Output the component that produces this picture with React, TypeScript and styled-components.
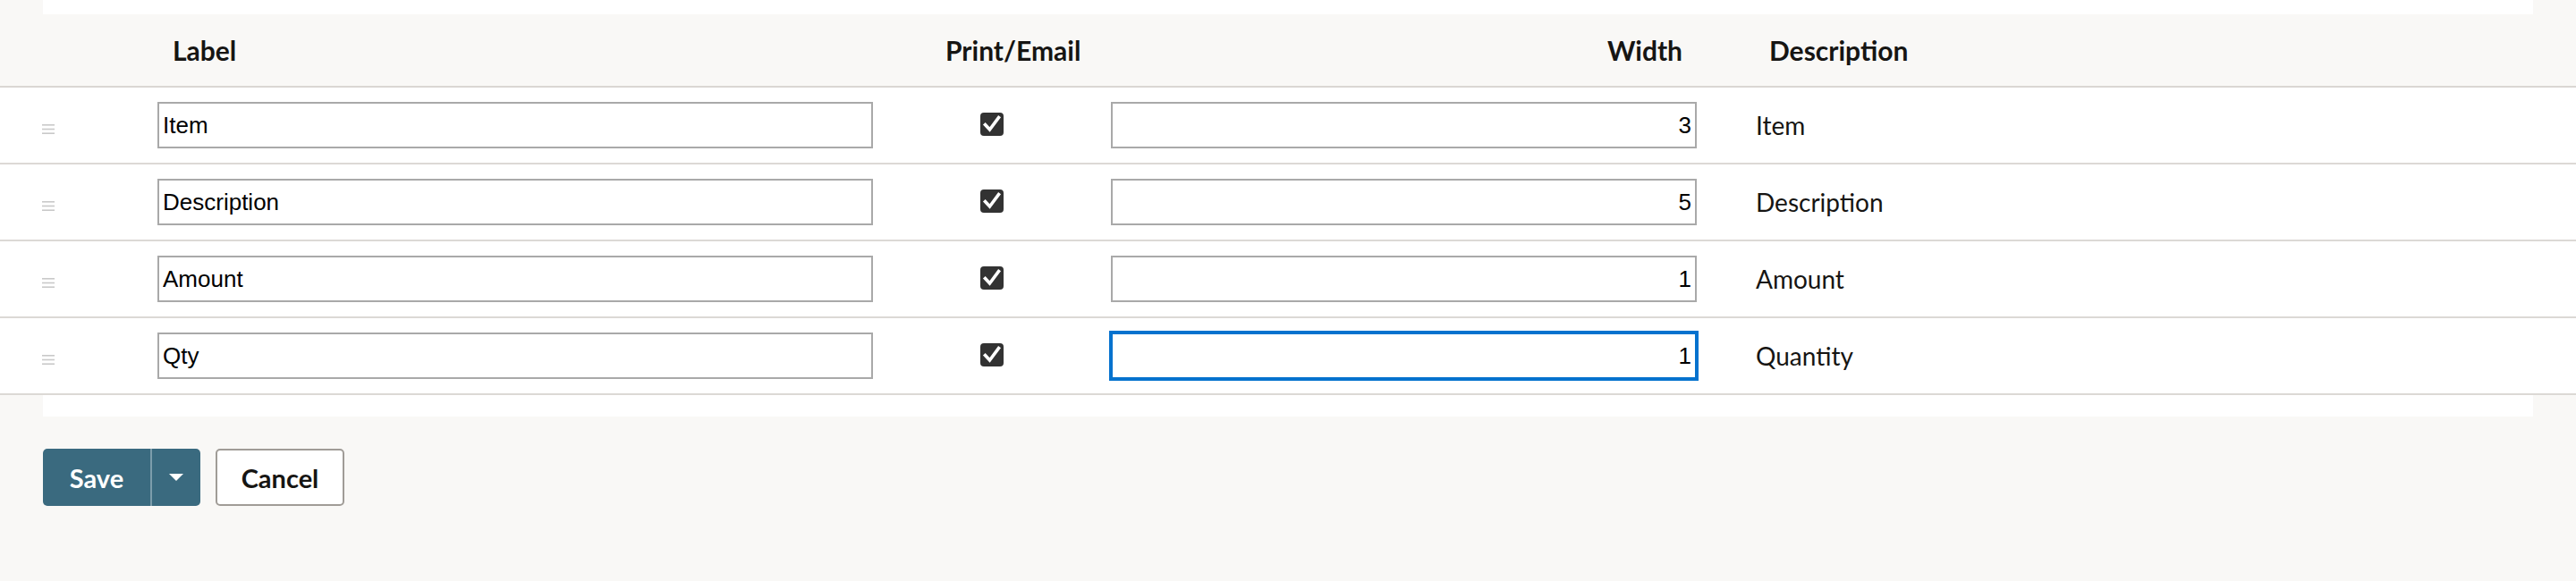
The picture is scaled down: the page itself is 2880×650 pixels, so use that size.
import React from 'react';
import styled, { createGlobalStyle } from 'styled-components';

interface ColumnRow {
  label: string;
  width: string;
  description: string;
  focused?: boolean;
}

const rows: ColumnRow[] = [
  { label: 'Item', width: '3', description: 'Item' },
  { label: 'Description', width: '5', description: 'Description' },
  { label: 'Amount', width: '1', description: 'Amount' },
  { label: 'Qty', width: '1', description: 'Quantity', focused: true },
];

const GlobalStyle = createGlobalStyle`
  html, body {
    margin: 0;
    padding: 0;
    background: #f9f8f6;
  }
  body {
    font-family: Lato, "Noto Sans", sans-serif;
    color: #161513;
  }
`;

const COLUMNS = '160px 832px 234px 687px 1fr';

const DragHandle: React.FC = () => (
  <StyledHandle width="14" height="11" viewBox="0 0 14 11">
    <rect x="0" y="0" width="14" height="1.6" fill="#c9c9c9" />
    <rect x="0" y="4.7" width="14" height="1.6" fill="#c9c9c9" />
    <rect x="0" y="9.4" width="14" height="1.6" fill="#c9c9c9" />
  </StyledHandle>
);

const CheckBox: React.FC = () => (
  <StyledCheck role="checkbox" aria-checked="true">
    <svg width="26" height="26" viewBox="0 0 26 26">
      <polyline
        points="5.5,13.5 10.5,19 20.5,5.5"
        fill="none"
        stroke="#ffffff"
        strokeWidth="3.6"
        strokeLinecap="square"
      />
    </svg>
  </StyledCheck>
);

const App: React.FC = () => {
  return (
    <>
      <GlobalStyle />
      <StyledPage>
        <StyledCard>
          <StyledTable>
            <StyledHeaderRow>
              <StyledHeadCell />
              <StyledHeadCell $pl={33}>Label</StyledHeadCell>
              <StyledHeadCell $pl={65}>Print/Email</StyledHeadCell>
              <StyledHeadCell $align="right" $pr={32}>
                Width
              </StyledHeadCell>
              <StyledHeadCell $pl={65}>Description</StyledHeadCell>
            </StyledHeaderRow>
            {rows.map((row) => (
              <StyledRow key={row.label}>
                <StyledHandleCell>
                  <DragHandle />
                </StyledHandleCell>
                <StyledCell>
                  <StyledInput defaultValue={row.label} />
                </StyledCell>
                <StyledCell $center>
                  <CheckBox />
                </StyledCell>
                <StyledCell>
                  <StyledInput defaultValue={row.width} $right $focused={row.focused} />
                </StyledCell>
                <StyledTextCell>{row.description}</StyledTextCell>
              </StyledRow>
            ))}
          </StyledTable>
        </StyledCard>
        <StyledFooter>
          <StyledSplitButton>
            <StyledSaveMain>Save</StyledSaveMain>
            <StyledSaveCaret aria-label="More save options">
              <svg width="16" height="8" viewBox="0 0 16 8">
                <polygon points="0,0 16,0 8,8" fill="#ffffff" />
              </svg>
            </StyledSaveCaret>
          </StyledSplitButton>
          <StyledCancel>Cancel</StyledCancel>
        </StyledFooter>
      </StyledPage>
    </>
  );
};

const StyledPage = styled.div`
  width: 2880px;
  min-height: 650px;
  background: #f9f8f6;
`;

const StyledCard = styled.div`
  margin: 0 48px;
  padding: 16px 0 24px;
  background: #ffffff;
`;

const StyledTable = styled.div`
  margin: 0 -48px;
`;

const StyledHeaderRow = styled.div`
  display: grid;
  grid-template-columns: ${COLUMNS};
  height: 82px;
  box-sizing: border-box;
  background: #f9f8f6;
  border-bottom: 2px solid #dad7d3;
`;

const StyledHeadCell = styled.div<{ $pl?: number; $pr?: number; $align?: 'left' | 'right' }>`
  display: flex;
  align-items: center;
  justify-content: ${(props) => (props.$align === 'right' ? 'flex-end' : 'flex-start')};
  padding-left: ${(props) => props.$pl ?? 0}px;
  padding-right: ${(props) => props.$pr ?? 0}px;
  font-family: Lato, "Noto Sans", sans-serif;
  font-size: 30px;
  font-weight: 700;
  color: #161513;
  white-space: nowrap;
`;

const StyledRow = styled.div`
  display: grid;
  grid-template-columns: ${COLUMNS};
  height: 86px;
  box-sizing: border-box;
  background: #ffffff;
  border-bottom: 2px solid #dcd9d5;
`;

const StyledCell = styled.div<{ $center?: boolean }>`
  display: flex;
  align-items: center;
  justify-content: ${(props) => (props.$center ? 'center' : 'flex-start')};
  padding: 0 16px;
`;

const StyledHandleCell = styled.div`
  display: flex;
  align-items: center;
  padding-left: 47px;
`;

const StyledHandle = styled.svg`
  display: block;
  margin-top: 9px;
`;

const StyledTextCell = styled.div`
  display: flex;
  align-items: center;
  padding-left: 50px;
  font-family: Lato, "Noto Sans", sans-serif;
  font-size: 28px;
  color: #161513;
`;

const StyledInput = styled.input<{ $right?: boolean; $focused?: boolean }>`
  display: block;
  width: 100%;
  height: 52px;
  box-sizing: border-box;
  margin: 0;
  padding: 0 4px;
  border: 2px solid ${(props) => (props.$focused ? '#0572ce' : '#a9a9a9')};
  border-radius: 0;
  box-shadow: ${(props) => (props.$focused ? '0 0 0 2px #0572ce' : 'none')};
  outline: none;
  background: #ffffff;
  font-family: "Liberation Sans", Arial, sans-serif;
  font-size: 26px;
  color: #000000;
  text-align: ${(props) => (props.$right ? 'right' : 'left')};
`;

const StyledCheck = styled.span`
  display: flex;
  width: 26px;
  height: 26px;
  margin-top: -2px;
  border-radius: 4px;
  background: #323232;
`;

const StyledFooter = styled.div`
  display: flex;
  gap: 17px;
  padding: 36px 48px;
`;

const StyledSplitButton = styled.div`
  display: flex;
  height: 64px;
  border-radius: 5px;
  overflow: hidden;
  background: #3a6a7f;
`;

const StyledSaveMain = styled.button`
  width: 120px;
  border: none;
  background: transparent;
  color: #ffffff;
  font-family: Lato, "Noto Sans", sans-serif;
  font-size: 29px;
  font-weight: 700;
  cursor: pointer;
`;

const StyledSaveCaret = styled.button`
  display: flex;
  align-items: center;
  justify-content: center;
  width: 56px;
  padding: 0;
  border: none;
  border-left: 2px solid #7d9dab;
  background: transparent;
  cursor: pointer;
`;

const StyledCancel = styled.button`
  width: 144px;
  height: 64px;
  box-sizing: border-box;
  border: 2px solid #a09c97;
  border-radius: 5px;
  background: #ffffff;
  color: #161513;
  font-family: Lato, "Noto Sans", sans-serif;
  font-size: 29px;
  font-weight: 700;
  cursor: pointer;
`;

export default App;
